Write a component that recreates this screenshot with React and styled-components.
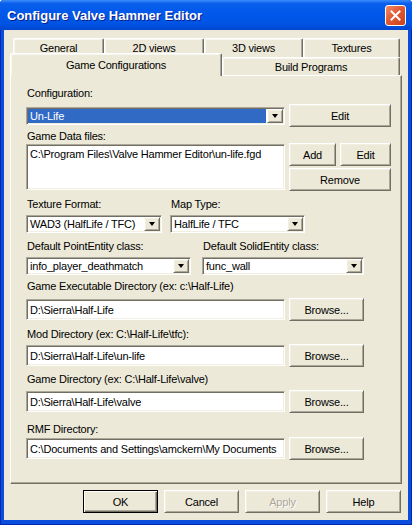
import React from 'react';
import styled, { css, createGlobalStyle } from 'styled-components';

const GlobalStyle = createGlobalStyle`
  * { box-sizing: border-box; }
  body {
    margin: 0;
    background: #fff;
    font-family: "Liberation Sans", Arial, sans-serif;
    font-size: 11px;
    letter-spacing: -0.2px;
    color: #000;
  }
`;

const raised = css`
  background: #ECE9D8;
  border: 1px solid;
  border-color: #fff #716F64 #716F64 #fff;
  box-shadow: inset 1px 1px #F1EFE2, inset -1px -1px #ACA899;
`;

const sunken = css`
  background: #fff;
  border: 1px solid;
  border-color: #ACA899 #fff #fff #ACA899;
  box-shadow: inset 1px 1px #716F64, inset -1px -1px #F1EFE2;
`;

const Window = styled.div`
  width: 412px;
  height: 525px;
  display: flex;
  flex-direction: column;
  background: #0A4CDB;
  border-radius: 4px 4px 0 0;
  box-shadow: inset 0 0 0 1px #0029B0;
  overflow: hidden;
`;

const TitleBar = styled.div`
  height: 30px;
  flex: none;
  display: flex;
  align-items: center;
  justify-content: space-between;
  padding: 1px 6px 0 7px;
  background: linear-gradient(180deg, #3B8CFA 0%, #0A5EEC 12%, #0058EA 45%, #0054E3 80%, #0045CF 100%);
`;

const Title = styled.span`
  color: #fff;
  font-family: "Liberation Sans", Arial, sans-serif;
  font-weight: bold;
  font-size: 13px;
  letter-spacing: 0;
  text-shadow: 1px 1px #0A1E8C;
`;

const CloseButton = styled.div`
  width: 21px;
  height: 21px;
  display: flex;
  align-items: center;
  justify-content: center;
  border: 1px solid #fff;
  border-radius: 3px;
  background: linear-gradient(135deg, #F08C6A 0%, #E15A32 45%, #C9421C 100%);
`;

const Client = styled.div`
  flex: 1;
  margin: 0 4px 5px;
  padding: 8px 6px 0;
  background: #ECE9D8;
  display: flex;
  flex-direction: column;
`;

const TabRow = styled.div`
  display: flex;
  align-items: flex-end;
  height: ${p => p.$h}px;
  margin-left: ${p => p.$indent || 0}px;
  margin-top: ${p => p.$mt || 0}px;
`;

const Tab = styled.div`
  position: relative;
  z-index: ${p => (p.$active ? 3 : p.$front ? 2 : 1)};
  width: ${p => p.$w}px;
  height: ${p => p.$h}px;
  margin-bottom: ${p => (p.$active ? -1 : 0)}px;
  padding-bottom: ${p => (p.$active ? 1 : 0)}px;
  display: flex;
  align-items: center;
  justify-content: center;
  background: #ECE9D8;
  border-top: 1px solid #fff;
  border-left: 1px solid #fff;
  border-right: 1px solid #716F64;
  border-radius: 2px 2px 0 0;
  box-shadow: inset -1px 0 #ACA899, inset 1px 1px #F7F6F1;
`;

const Panel = styled.div`
  height: 409px;
  flex: none;
  border: 1px solid;
  border-color: #fff #716F64 #716F64 #fff;
  box-shadow: inset -1px -1px #ACA899;
  padding: 11px 0 0 15px;
  display: flex;
  flex-direction: column;
`;

const Label = styled.div`
  height: 13px;
  line-height: 13px;
  padding-left: 1px;
  margin-top: ${p => p.$mt || 0}px;
  white-space: nowrap;
`;

const Row = styled.div`
  display: flex;
  align-items: ${p => p.$align || 'center'};
  gap: ${p => p.$gap ?? 4}px;
  margin-top: ${p => p.$mt || 0}px;
`;

const Column = styled.div`
  display: flex;
  flex-direction: column;
  width: ${p => p.$w}px;
  gap: ${p => p.$gap || 0}px;
`;

const Button = styled.div`
  ${raised};
  width: ${p => p.$w}px;
  height: 23px;
  display: flex;
  align-items: center;
  justify-content: center;
  color: ${p => (p.$disabled ? '#ACA899' : '#000')};
  text-shadow: ${p => (p.$disabled ? '1px 1px #fff' : 'none')};
  ${p => p.$default && css`
    border: 1px solid #000;
    box-shadow: inset 1px 1px #fff, inset -1px -1px #716F64, inset -2px -2px #ACA899;
  `}
`;

const Combo = styled.div`
  ${sunken};
  width: ${p => p.$w}px;
  height: 18px;
  padding: 1px;
  display: flex;
  margin-top: ${p => p.$mt || 0}px;
`;

const ComboText = styled.div`
  flex: 1;
  display: flex;
  align-items: center;
  padding-left: 2px;
  margin-right: 1px;
  background: ${p => (p.$selected ? '#316AC5' : 'transparent')};
  color: ${p => (p.$selected ? '#fff' : '#000')};
  white-space: nowrap;
  overflow: hidden;
`;

const ComboArrow = styled.div`
  ${raised};
  width: 16px;
  height: 14px;
  display: flex;
  align-items: center;
  justify-content: center;
  &::after {
    content: '';
    border-left: 3.5px solid transparent;
    border-right: 3.5px solid transparent;
    border-top: 4px solid #000;
    margin-left: -1px;
  }
`;

const EditBox = styled.div`
  ${sunken};
  width: ${p => p.$w}px;
  height: 21px;
  display: flex;
  align-items: center;
  padding-left: 3px;
  white-space: nowrap;
  overflow: hidden;
`;

const ListBox = styled.div`
  ${sunken};
  width: ${p => p.$w}px;
  height: 46px;
  margin-top: 1px;
  padding: 3px 3px;
  line-height: 13px;
  white-space: nowrap;
  overflow: hidden;
`;

const ButtonBar = styled.div`
  display: flex;
  justify-content: flex-end;
  gap: 6px;
  margin-top: 6px;
  padding-right: 1px;
`;

const DropDown = ({ w, value, selected, mt }) => (
  <Combo $w={w} $mt={mt}>
    <ComboText $selected={selected}>{value}</ComboText>
    <ComboArrow />
  </Combo>
);

const PathField = ({ label, value, mt, rowMt }) => (
  <>
    <Label $mt={mt}>{label}</Label>
    <Row $mt={rowMt}>
      <EditBox $w={259}>{value}</EditBox>
      <Button $w={75}>Browse...</Button>
    </Row>
  </>
);

const backTabs = [
  { name: 'General', w: 91 },
  { name: '2D views', w: 100 },
  { name: '3D views', w: 99 },
  { name: 'Textures', w: 97 },
];

export default function App() {
  return (
    <>
      <GlobalStyle />
      <Window>
        <TitleBar>
          <Title>Configure Valve Hammer Editor</Title>
          <CloseButton>
            <svg width="11" height="11" viewBox="0 0 11 11">
              <path d="M1.5 1.5 L9.5 9.5 M9.5 1.5 L1.5 9.5" stroke="#fff" strokeWidth="2" strokeLinecap="square" />
            </svg>
          </CloseButton>
        </TitleBar>
        <Client>
          <TabRow $h={19} $indent={3}>
            {backTabs.map(t => (
              <Tab key={t.name} $w={t.w} $h={19}>{t.name}</Tab>
            ))}
          </TabRow>
          <TabRow $h={22} $mt={-4}>
            <Tab $w={212} $h={23} $active>Game Configurations</Tab>
            <Tab $w={178} $h={18} $front>Build Programs</Tab>
          </TabRow>
          <Panel>
            <Label>Configuration:</Label>
            <Row $mt={4}>
              <DropDown w={259} value="Un-Life" selected />
              <Button $w={102}>Edit</Button>
            </Row>

            <Label $mt={3}>Game Data files:</Label>
            <Row $align="flex-start">
              <ListBox $w={259}>{'C:\\Program Files\\Valve Hammer Editor\\un-life.fgd'}</ListBox>
              <Column $w={102} $gap={2}>
                <Row>
                  <Button $w={47}>Add</Button>
                  <Button $w={51}>Edit</Button>
                </Row>
                <Button $w={102}>Remove</Button>
              </Column>
            </Row>

            <Row $mt={7} $gap={8} $align="flex-start">
              <Column $w={136}>
                <Label>Texture Format:</Label>
                <DropDown w={136} value="WAD3 (HalfLife / TFC)" mt={4} />
              </Column>
              <Column $w={135}>
                <Label>Map Type:</Label>
                <DropDown w={135} value="HalfLife / TFC" mt={4} />
              </Column>
            </Row>

            <Row $mt={7} $gap={11} $align="flex-start">
              <Column $w={165}>
                <Label>Default PointEntity class:</Label>
                <DropDown w={165} value="info_player_deathmatch" mt={4} />
              </Column>
              <Column $w={162}>
                <Label>Default SolidEntity class:</Label>
                <DropDown w={162} value="func_wall" mt={4} />
              </Column>
            </Row>

            <PathField
              label="Game Executable Directory (ex: c:\Half-Life)"
              value={'D:\\Sierra\\Half-Life'}
              mt={5}
              rowMt={5}
            />
            <PathField
              label="Mod Directory (ex: C:\Half-Life\tfc):"
              value={'D:\\Sierra\\Half-Life\\un-life'}
              mt={7}
              rowMt={3}
            />
            <PathField
              label="Game Directory (ex: C:\Half-Life\valve)"
              value={'D:\\Sierra\\Half-Life\\valve'}
              mt={6}
              rowMt={4}
            />
            <PathField
              label="RMF Directory:"
              value={'C:\\Documents and Settings\\amckern\\My Documents'}
              mt={10}
              rowMt={1}
            />
          </Panel>
          <ButtonBar>
            <Button $w={75} $default>OK</Button>
            <Button $w={75}>Cancel</Button>
            <Button $w={75} $disabled>Apply</Button>
            <Button $w={75}>Help</Button>
          </ButtonBar>
        </Client>
      </Window>
    </>
  );
}
